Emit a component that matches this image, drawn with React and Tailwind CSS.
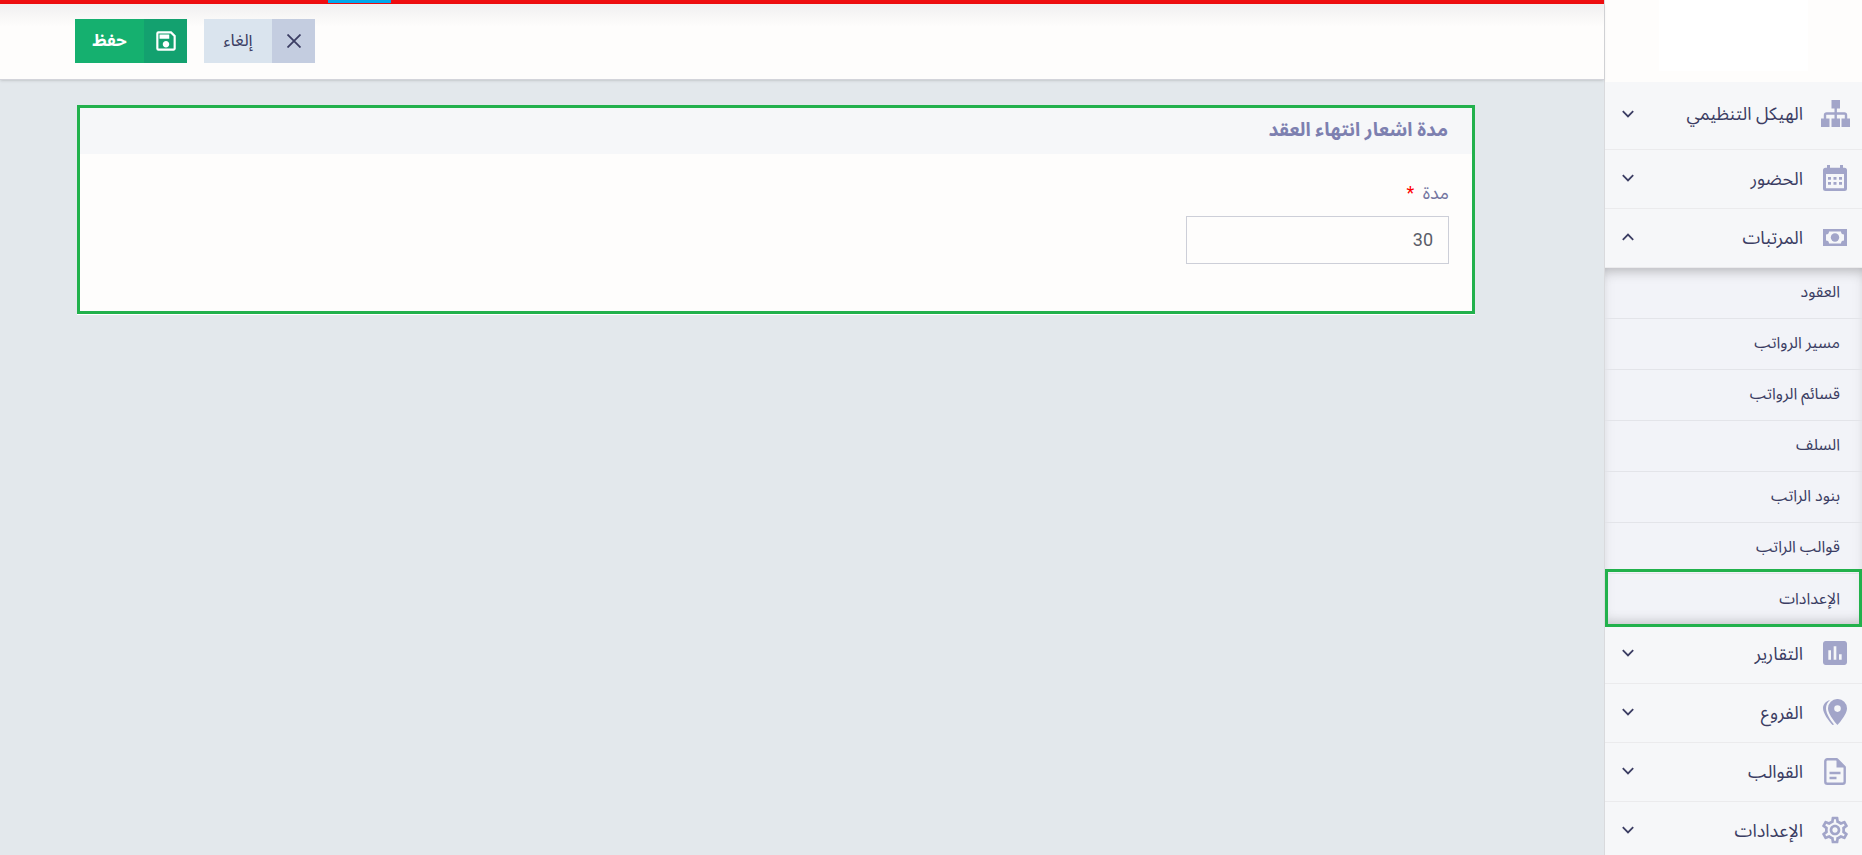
import { MdAssessment, MdOutlineSave, MdOutlineSettings } from 'react-icons/md';

const SitemapIcon = () => (
    <svg viewBox="0 0 29 27" className="w-[29px]" fill="currentColor" aria-hidden="true">
        <path d="M10.500 0h8.500v8.500h-8.500zM0 18.500h8.500V27H0zM10.500 18.500h8.500V27h-8.500zM20.500 18.500H29V27h-8.500z" />
        <path d="M14.700 8v11M4 19v-4a1.500 1.500 0 0 1 1.500-1.500h18A1.500 1.500 0 0 1 25 15v4" fill="none" stroke="currentColor" strokeWidth="2.400" />
    </svg>
);

const CalendarIcon = () => (
    <svg viewBox="0 0 24 26" className="w-6" fill="currentColor" aria-hidden="true">
        <path fillRule="evenodd" d="M4 0h3v2.700h10V0h3v2.700h1.500A2.500 2.500 0 0 1 24 5.200v18.300a2.500 2.500 0 0 1-2.500 2.500h-19A2.500 2.500 0 0 1 0 23.500V5.200a2.500 2.500 0 0 1 2.500-2.500H4zM3 9v14.300h18V9z" />
        <path d="M5 12h3v2.700H5zM10.500 12h3v2.700h-3zM16 12h3v2.700h-3zM5 17h3v2.700H5zM10.500 17h3v2.700h-3zM16 17h3v2.700h-3z" />
    </svg>
);

const MoneyIcon = () => (
    <svg viewBox="0 0 24 17" className="w-6" fill="currentColor" aria-hidden="true">
        <path fillRule="evenodd" d="M0 0h24v17H0zM6 2.500A3 3 0 0 1 3 5.500v6a3 3 0 0 1 3 3h12a3 3 0 0 1 3-3v-6a3 3 0 0 1-3-3z" />
        <circle cx="12" cy="8.500" r="4.200" />
    </svg>
);

const BranchIcon = () => (
    <svg viewBox="0 0 24 26" className="w-6" fill="currentColor" aria-hidden="true">
        <path fillRule="evenodd" d="M14.500 0A9.300 9.300 0 0 1 24 9.300C24 16 14.500 26 14.500 26S5 16 5 9.300A9.300 9.300 0 0 1 14.500 0zm0 6.300a3.300 3.300 0 1 0 0 6.600 3.300 3.300 0 0 0 0-6.600z" />
        <path d="M7 1.200C4.500 2.800 3 6 3 9.300 3 14.500 7.500 21.500 11 25.500l-1.500.5C5.500 21.500 0 14.500 0 9 0 5.500 3 1.800 7 1.200z" />
    </svg>
);

const DocumentIcon = () => (
    <svg viewBox="0 0 22 27" className="w-[22px]" fill="none" stroke="currentColor" strokeWidth="2.400" aria-hidden="true">
        <path d="M13 1.300H3.300a2 2 0 0 0-2 2v20.400a2 2 0 0 0 2 2h15.400a2 2 0 0 0 2-2V9z" strokeLinejoin="round" />
        <path d="M12.500 1v8.500H21z" fill="currentColor" stroke="none" />
        <path d="M5.500 15h11M5.500 20h7" />
    </svg>
);

const topMenu = [
    { title: 'الهيكل التنظيمي', icon: <SitemapIcon />, row: 'h-[68px] pb-1' },
    { title: 'الحضور', icon: <CalendarIcon />, row: 'h-[59px] pb-0.5' },
    { title: 'المرتبات', icon: <MoneyIcon />, row: 'h-[59px] pb-0.5', open: true },
];

const salaryLinks = [
    'العقود',
    'مسير الرواتب',
    'قسائم الرواتب',
    'السلف',
    'بنود الراتب',
    'قوالب الراتب',
    'الإعدادات',
];

const bottomMenu = [
    { title: 'التقارير', icon: <MdAssessment className="w-8 h-8" />, row: 'h-[59px] pb-0.5' },
    { title: 'الفروع', icon: <BranchIcon />, row: 'h-[59px] pb-0.5' },
    { title: 'القوالب', icon: <DocumentIcon />, row: 'h-[59px] pb-0.5' },
    { title: 'الإعدادات', icon: <MdOutlineSettings className="w-8 h-8" />, row: 'h-[59px] pb-0.5' },
];

const MenuItem = ({ item }) => (
    <button
        type="button"
        aria-expanded={!!item.open}
        className={`w-full shrink-0 flex items-center pr-[11px] pl-[17px] border-b border-[#ebebed] text-[18px] text-[#3b3d63] ${item.row}`}
    >
        <span className="w-8 flex justify-center text-[#a2a5c9]">{item.icon}</span>
        <span className="mr-4 flex-1 text-right">{item.title}</span>
        <svg viewBox="0 0 12 8" className={`w-3 ${item.open ? 'rotate-180' : ''}`} fill="none" stroke="currentColor" strokeWidth="1.800" aria-hidden="true">
            <path d="M0.800 1.200l5.200 5.200 5.200-5.200" />
        </svg>
    </button>
);

const Sidebar = () => (
    <aside className="w-[258px] shrink-0 flex flex-col border-l border-[#d9dadd] bg-[#f6f7f9]">
        <div className="h-[82px] shrink-0 flex justify-center bg-[#fefdfc]">
            <div className="w-[149px] h-[71px] bg-white" />
        </div>
        <nav className="flex flex-col">
            {topMenu.map((item) => <MenuItem key={item.title} item={item} />)}
            <ul className="shrink-0 bg-[#f2f3f8] shadow-[inset_0_0_14px_rgba(0,0,0,0.06),inset_0_12px_14px_-10px_rgba(0,0,0,0.25),inset_0_-12px_14px_-10px_rgba(0,0,0,0.2)]">
                {salaryLinks.map((title, i) => {
                    const active = i === salaryLinks.length - 1;
                    return (
                        <li key={title} className={`relative h-[51px] ${active ? '' : 'border-b border-[#e3e4e9]'}`}>
                            <a href="#" className="h-full flex items-center pr-[22px] pb-0.5 text-[16px] text-[#3b3d63]">{title}</a>
                            {active && <span className="absolute inset-x-0 -top-[5px] -bottom-0.5 z-10 border-3 border-[#22b14c] pointer-events-none" />}
                        </li>
                    );
                })}
            </ul>
            {bottomMenu.map((item) => <MenuItem key={item.title} item={item} />)}
        </nav>
    </aside>
);

const App = () => {
    return (
        <div dir="rtl" className="h-screen overflow-hidden flex bg-[#e3e8ec] font-[Roboto,'Noto_Sans_Arabic','DejaVu_Sans',sans-serif]">
            <Sidebar />
            <div className="flex-1 min-w-0">
                {/* Loading bar */}
                <div className="h-1 bg-[#ef0e10] flex justify-end pl-[328px]">
                    <div className="w-[63px] h-[3px] bg-[#00a8ec]" />
                </div>

                {/* Actions */}
                <header className="h-[76px] flex justify-end gap-[17px] pt-[15px] pl-[75px] border-b border-[#d3d4da] bg-[#fefdfc] bg-linear-to-b from-[#f1f0f0] via-[#fefdfc] via-30% to-[#fefdfc] shadow-sm">
                    <button type="button" className="w-[111px] h-11 flex items-center bg-[#dae4ee] text-[17px] text-[#3b3d63]">
                        <span className="w-[43px] h-full flex items-center justify-center bg-[#c4cde0]">
                            <svg viewBox="0 0 14 14" className="w-3.5" fill="none" stroke="currentColor" strokeWidth="1.800" aria-hidden="true">
                                <path d="M0.500 0.500l13 13M13.500 0.500l-13 13" />
                            </svg>
                        </span>
                        <span className="flex-1">إلغاء</span>
                    </button>
                    <button type="button" className="w-28 h-11 flex items-center bg-[#15b06f] text-[17px] font-bold text-white">
                        <span className="w-[43px] h-full flex items-center justify-center bg-[#13a16f]">
                            <MdOutlineSave className="w-[26px] h-[26px]" />
                        </span>
                        <span className="flex-1">حفظ</span>
                    </button>
                </header>

                {/* Contract expiry form */}
                <main className="pt-[25px] pr-[129px] pl-[77px]">
                    <section className="border-3 border-[#22b14c] bg-[#fefdfc] shadow-[0_1px_0_#ffffff]">
                        <h1 className="h-[46px] flex items-center pr-6 pb-0.5 bg-[#f6f7f9] text-[19px] font-bold text-[#7d80b0]">
                            مدة اشعار انتهاء العقد
                        </h1>
                        <div className="pt-6 pr-[23px] pb-[47px]">
                            <label htmlFor="period" className="block h-[38px] leading-[30px] text-[18px] text-[#7375a0]">
                                مدة <span className="mr-1 text-[#ff0000]">*</span>
                            </label>
                            <input
                                id="period"
                                type="text"
                                defaultValue="30"
                                required
                                className="block w-[263px] h-12 px-[15px] pb-0.5 border border-[#cdcfd8] text-[18px] text-[#5a5d68] outline-none"
                            />
                        </div>
                    </section>
                </main>
            </div>
        </div>
    );
};

export default App;
